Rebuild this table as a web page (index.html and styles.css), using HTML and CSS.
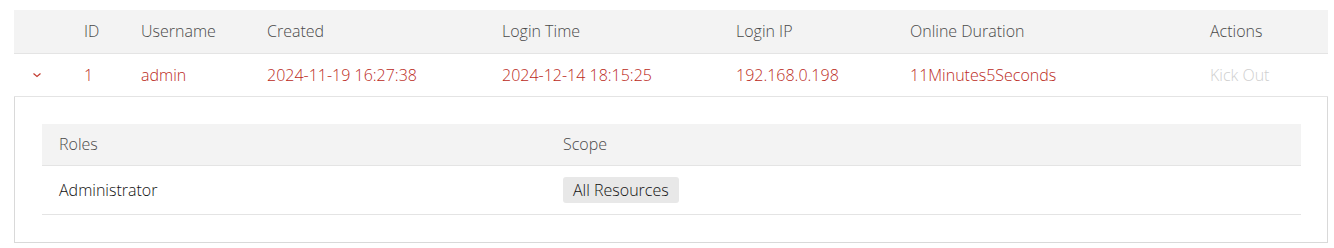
FILE: index.html
```html
<!DOCTYPE html>
<html lang="en">
<head>
<meta charset="utf-8">
<title>Online Users</title>
<link rel="stylesheet" href="styles.css">
</head>
<body>
<div class="page">
  <table class="grid">
    <colgroup>
      <col class="c-exp"><col class="c-id"><col class="c-user"><col class="c-created"><col class="c-login"><col class="c-ip"><col class="c-dur"><col class="c-act">
    </colgroup>
    <thead>
      <tr>
        <th></th><th>ID</th><th>Username</th><th>Created</th><th>Login Time</th><th>Login IP</th><th>Online Duration</th><th>Actions</th>
      </tr>
    </thead>
    <tbody>
      <tr class="row active">
        <td class="exp"><svg width="10" height="6" viewBox="0 0 10 6"><path d="M1.5 1.5 L5 4.5 L8.5 1.5" fill="none" stroke="#c33a2f" stroke-width="1.2"/></svg></td>
        <td>1</td><td>admin</td><td>2024-11-19 16:27:38</td><td>2024-12-14 18:15:25</td><td>192.168.0.198</td><td>11Minutes5Seconds</td>
        <td><span class="kick">Kick Out</span></td>
      </tr>
      <tr class="detail">
        <td colspan="8">
          <div class="detail-box">
            <table class="inner">
              <colgroup><col class="c-role"><col class="c-scope"></colgroup>
              <thead><tr><th>Roles</th><th>Scope</th></tr></thead>
              <tbody><tr><td>Administrator</td><td><span class="tag">All Resources</span></td></tr></tbody>
            </table>
          </div>
        </td>
      </tr>
    </tbody>
  </table>
</div>
</body>
</html>
```

FILE: styles.css
```css
* { box-sizing: border-box; }
html, body { margin: 0; padding: 0; background: #fff; }
body { font-family: "Open Sans", "Noto Sans", sans-serif; font-size: 16px; font-weight: 300; }
.page { padding: 10px 6px 0 14px; }
.grid { width: 1314px; border-collapse: collapse; table-layout: fixed; }
.c-exp { width: 54px; } .c-id { width: 57px; } .c-user { width: 126px; } .c-created { width: 235px; }
.c-login { width: 234px; } .c-ip { width: 174px; } .c-dur { width: 300px; } .c-act { width: 134px; }
.grid > thead th {
  background: #f3f3f3; color: #4a4a4a; font-weight: 300; text-align: left;
  height: 43px; padding: 0 16px; border-bottom: 1px solid #e4e4e4;
}
.grid > tbody > .row td {
  height: 43px; padding: 0 16px; color: #bb2a22; border-bottom: 1px solid #e4e4e4;
}
.grid > tbody > .row td.exp { padding: 0 0 0 18px; }
.exp svg { display: block; }
.kick { color: #cfcfcf; }
.detail > td { padding: 0; }
.detail-box { border: 1px solid #d9d9d9; border-top: none; padding: 27px 26px 27px 27px; }
.inner { width: 100%; border-collapse: collapse; table-layout: fixed; }
.c-role { width: 504px; }
.inner th { background: #f3f3f3; color: #4a4a4a; font-weight: 300; text-align: left; height: 42px; padding: 0 17px; border-bottom: 1px solid #e4e4e4; }
.inner td { color: #111; height: 49px; padding: 0 17px; border-bottom: 1px solid #e4e4e4; }
.tag { display: inline-block; background: #e8e8e8; border-radius: 3px; padding: 2px 10px; color: #111; line-height: 22px; }
```
